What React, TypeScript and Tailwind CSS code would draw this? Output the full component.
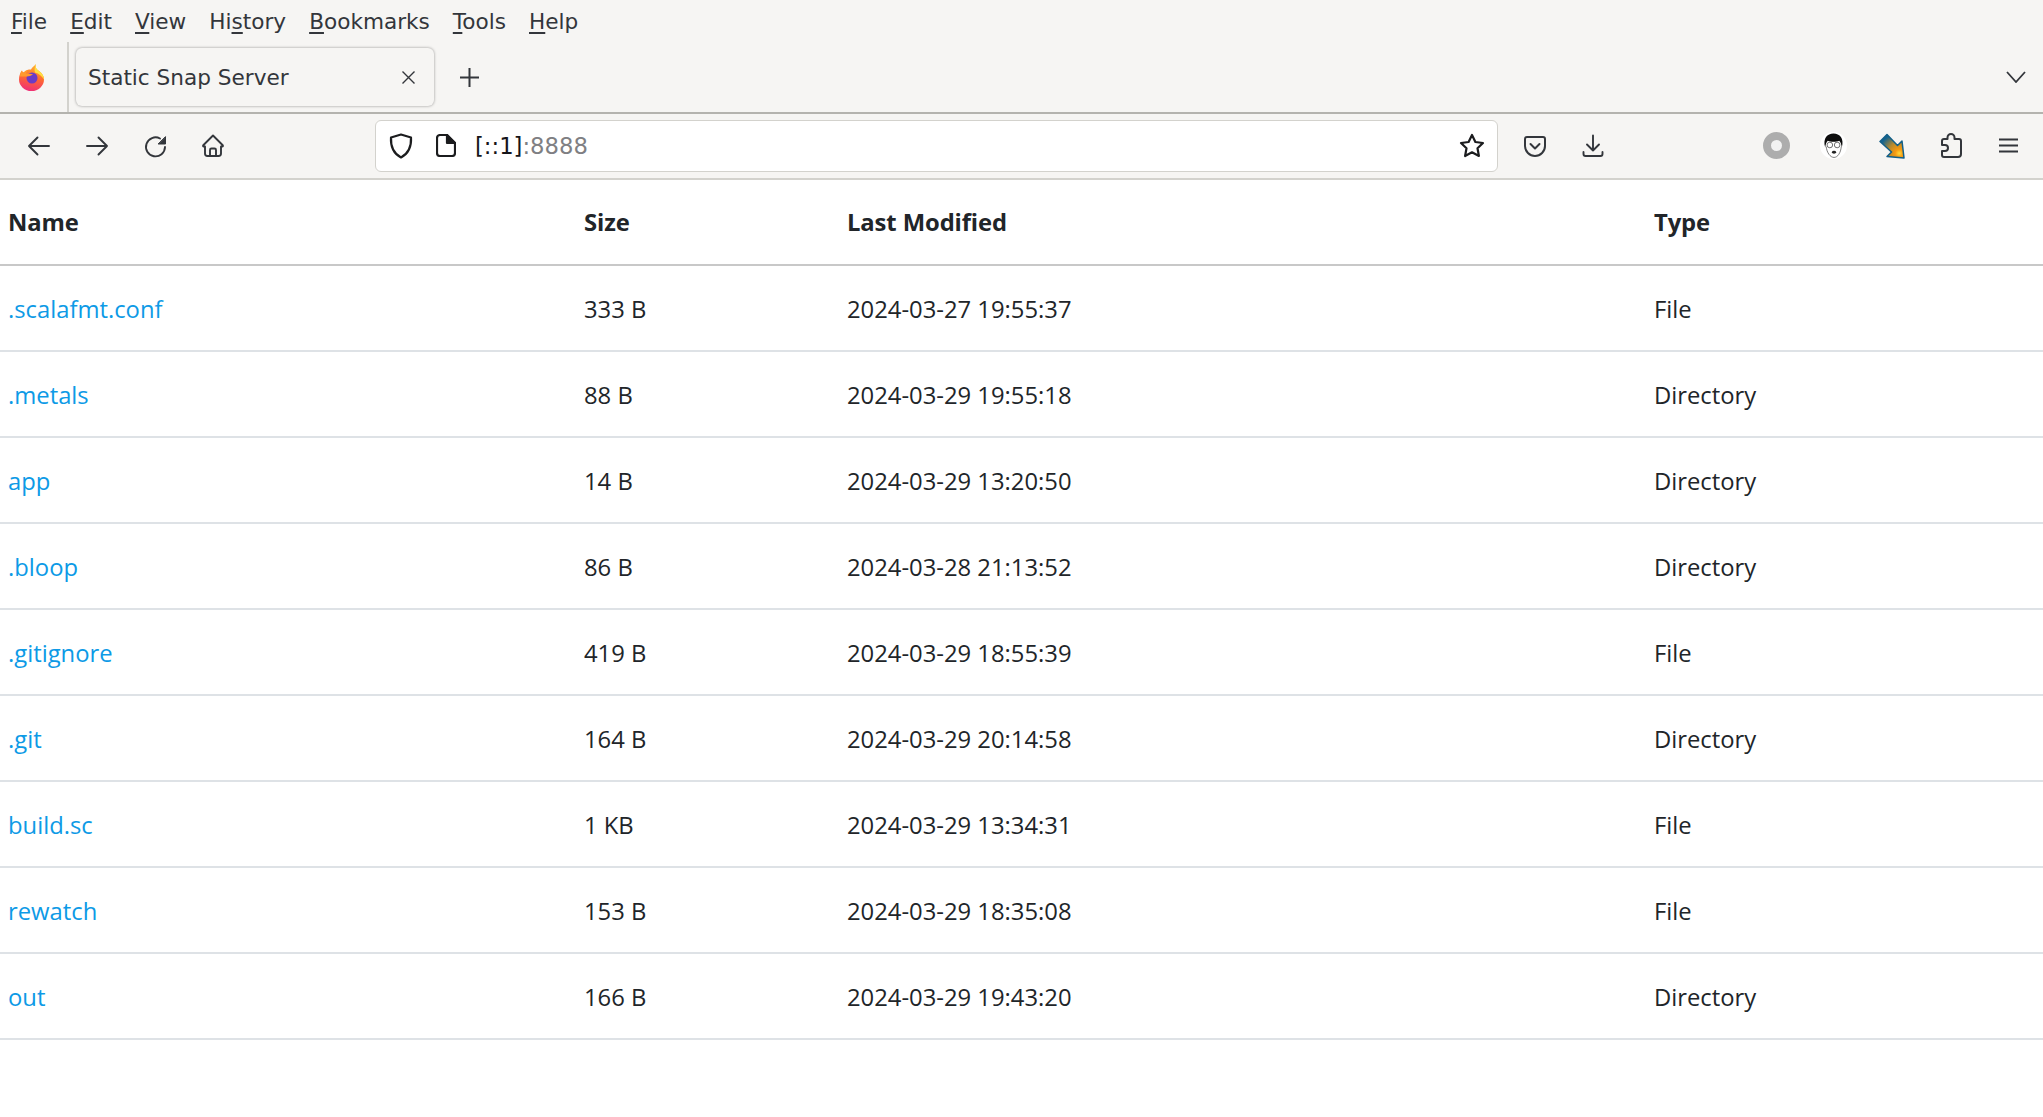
const rows = [
  [".scalafmt.conf", "333 B", "2024-03-27 19:55:37", "File"],
  [".metals", "88 B", "2024-03-29 19:55:18", "Directory"],
  ["app", "14 B", "2024-03-29 13:20:50", "Directory"],
  [".bloop", "86 B", "2024-03-28 21:13:52", "Directory"],
  [".gitignore", "419 B", "2024-03-29 18:55:39", "File"],
  [".git", "164 B", "2024-03-29 20:14:58", "Directory"],
  ["build.sc", "1 KB", "2024-03-29 13:34:31", "File"],
  ["rewatch", "153 B", "2024-03-29 18:35:08", "File"],
  ["out", "166 B", "2024-03-29 19:43:20", "Directory"],
];

const menus = [
  { before: "", key: "F", after: "ile" },
  { before: "", key: "E", after: "dit" },
  { before: "", key: "V", after: "iew" },
  { before: "Hi", key: "s", after: "tory" },
  { before: "", key: "B", after: "ookmarks" },
  { before: "", key: "T", after: "ools" },
  { before: "", key: "H", after: "elp" },
];

function Icon({ children }: { children: React.ReactNode }) {
  return (
    <svg width="24" height="24" viewBox="0 0 24 24" fill="none" stroke="#33363b" strokeWidth="1.9" strokeLinecap="round" strokeLinejoin="round">
      {children}
    </svg>
  );
}

function FirefoxLogo() {
  return (
    <svg width="25" height="27" viewBox="0 0 25 27">
      <defs>
        <linearGradient id="fxBody" x1="0.6" y1="0" x2="0.4" y2="1">
          <stop offset="0" stopColor="#ffb52e" />
          <stop offset="0.5" stopColor="#ff6a2f" />
          <stop offset="1" stopColor="#ef2f78" />
        </linearGradient>
      </defs>
      <path d="M17 0c-1 3 0 5 3 7 3 2 5 5 5 8.500a12.500 11.500 0 0 1-25 0C0 12 1 9 3 6.500c0 1 1 2 2 2C7 6 9 5.500 12 5.500c1-2 3-3.500 5-5.500z" fill="url(#fxBody)" />
      <path d="M17 0c-1 3 0 5 3 7 3 2 5 5 5 8.500-2-3-5-6-9-7-1-3 0-6 1-8.500z" fill="#ffdf3f" />
      <circle cx="13" cy="14" r="5.500" fill="#6a3bc6" />
      <path d="M1 12.500c0-3 1-5 2-6 0 1 1 2 2 2 1-2 2-2 4-2-1 1-2 2-2 3 2 0 5 0 7 1-2 1-4 2-6 2-3 0-5 0-7 0z" fill="#ff9a2e" />
    </svg>
  );
}

export default function App() {
  return (
    <div className="min-h-screen bg-white text-[#212529] font-['Open_Sans',sans-serif]">
      <div className="bg-[#f6f5f3] font-['DejaVu_Sans',sans-serif] text-[#33363b]">
        {/* Menu bar */}
        <div className="flex h-[42px] items-center gap-[23px] pl-[11px] pt-[2px] text-[21.6px]">
          {menus.map((m) => (
            <span key={m.key + m.after}>
              {m.before}
              <span className="underline underline-offset-[3px]">{m.key}</span>
              {m.after}
            </span>
          ))}
        </div>

        {/* Tab strip */}
        <div className="flex h-[72px] items-center border-b-2 border-[#b4b3ae]">
          <div className="flex h-full w-[69px] shrink-0 items-center justify-center border-r-2 border-[#d3d2cd] pr-[5px]">
            <FirefoxLogo />
          </div>
          <div className="ml-[7px] flex h-[58px] w-[358px] items-center justify-between rounded-[6px] bg-[#f6f5f3] pl-[12px] pr-[18px] text-[21.6px] shadow-[0_0_3px_rgba(0,0,0,0.4)]">
            <span className="pt-[3px]">Static Snap Server</span>
            <svg width="15" height="15" viewBox="0 0 15 15" stroke="#33363b" strokeWidth="1.4">
              <path d="M1.500 1.500l12 12M13.500 1.500l-12 12" />
            </svg>
          </div>
          <div className="ml-[26px] pt-[1px]">
            <svg width="19" height="19" viewBox="0 0 19 19" stroke="#33363b" strokeWidth="2">
              <path d="M9.500 0v19M0 9.500h19" />
            </svg>
          </div>
          <div className="ml-auto mr-[17px]">
            <svg width="20" height="12" viewBox="0 0 20 12" fill="none" stroke="#33363b" strokeWidth="1.8">
              <path d="M1 1l9 10 9-10" />
            </svg>
          </div>
        </div>

        {/* Nav bar */}
        <div className="flex h-[66px] items-center border-b-2 border-[#d3d2cd] pb-[1px]">
          <div className="ml-[27px]">
            <Icon><path d="M22 12H2M10.500 3.500L2 12l8.500 8.500" /></Icon>
          </div>
          <div className="ml-[34px]">
            <Icon><path d="M2 12h20M13.500 3.500L22 12l-8.500 8.500" /></Icon>
          </div>
          <div className="ml-[35px]">
            <Icon>
              <path d="M16 4.500A9.500 9.500 0 1 0 21 13" />
              <path d="M21.500 3v7h-7z" fill="#33363b" strokeWidth="1" />
            </Icon>
          </div>
          <div className="ml-[33px]">
            <Icon>
              <path d="M12 1.500L2.500 11c-.6.6-.6 1.500 0 1.500H4v7a2.500 2.500 0 0 0 2.500 2.500h11A2.500 2.500 0 0 0 20 19.500v-7h1.500c.6 0 .6-.9 0-1.500z" />
              <path d="M9 22v-6a1.500 1.500 0 0 1 1.500-1.500h3A1.500 1.500 0 0 1 15 16v6" />
            </Icon>
          </div>

          {/* URL bar */}
          <div className="ml-[150px] flex h-[52px] w-[1122.500px] shrink-0 items-center rounded-[6px] border border-[#d3d2cd] bg-white pl-[13px] pr-[12px]">
            <svg width="24" height="26" viewBox="0 0 24 26" fill="none" stroke="#1b1c1e" strokeWidth="2.200" strokeLinejoin="round">
              <path d="M12 1.500l10 3c.5 9-2.500 16-10 20C4.500 20.500 1.500 13.500 2 4.500z" />
            </svg>
            <div className="ml-[23px]">
              <svg width="20" height="23" viewBox="0 0 20 23" fill="none" stroke="#1b1c1e" strokeWidth="2.200" strokeLinejoin="round">
                <path d="M4 1h7l8 8v10a3 3 0 0 1-3 3H4a3 3 0 0 1-3-3V4a3 3 0 0 1 3-3z" />
                <path d="M11 1v8h8z" fill="#1b1c1e" />
              </svg>
            </div>
            <div className="ml-[19px] pt-[1px] text-[22.7px] text-[#15141a]">
              [::1]<span className="text-[#7f7f83]">:8888</span>
            </div>
            <div className="ml-auto">
              <svg width="26" height="26" viewBox="0 0 26 26" fill="none" stroke="#1b1c1e" strokeWidth="2.200" strokeLinejoin="round">
                <path d="M13 2l3.400 7 7.600 1-5.500 5.300 1.400 7.700-6.900-3.700-6.900 3.700 1.400-7.700L2 10l7.600-1z" />
              </svg>
            </div>
          </div>

          <div className="ml-[25px]">
            <svg width="24" height="24" viewBox="0 0 24 24" fill="none" stroke="#33363b" strokeWidth="2" strokeLinecap="round" strokeLinejoin="round">
              <path d="M4 3h16a2 2 0 0 1 2 2v7a10 10 0 0 1-20 0V5a2 2 0 0 1 2-2z" />
              <path d="M7.500 10l4.500 4.500L16.500 10" />
            </svg>
          </div>
          <div className="ml-[34px]">
            <Icon><path d="M12 1.500v15M6 10.500l6 6 6-6M2.500 18v2a2 2 0 0 0 2 2h15a2 2 0 0 0 2-2v-2" /></Icon>
          </div>

          {/* Extensions */}
          <div className="ml-[158px] h-[27px] w-[27px] rounded-full border-[8px] border-[#adadad] bg-[#f2f2f2]" />
          <div className="ml-[30px]">
            <svg width="27" height="27" viewBox="0 0 26 26">
              <circle cx="13" cy="13" r="13" fill="#fff" />
              <path d="M5 15C2.500 6 7 1.500 13 1.500S23.500 6 21 15c-.5-3-1-5-2.500-6.500-3 1.200-8 1.200-11 0C6 10 5.500 12 5 15z" fill="#0d0d0d" />
              <path d="M6 14c.5 6 4 10.500 7.500 10.500S20 20 20.500 14" fill="none" stroke="#666" strokeWidth="0.800" />
              <circle cx="9.500" cy="12.500" r="2.700" fill="none" stroke="#555" strokeWidth="0.800" />
              <circle cx="16.500" cy="12.500" r="2.700" fill="none" stroke="#555" strokeWidth="0.800" />
              <ellipse cx="13.500" cy="19.500" rx="2" ry="1.400" fill="#222" />
            </svg>
          </div>
          <div className="ml-[32px]">
            <svg width="26" height="26" viewBox="0 0 26 26">
              <defs>
                <radialGradient id="arrowGlow" cx="0.8" cy="0.8" r="0.85">
                  <stop offset="0" stopColor="#ffd83a" />
                  <stop offset="0.2" stopColor="#f79a10" />
                  <stop offset="0.55" stopColor="#b5892f" />
                  <stop offset="1" stopColor="#14648f" />
                </radialGradient>
              </defs>
              <path d="M8 1.500l10.500 11 4.500-4.500 2 17-17-1.500 4.500-4.500L1 8.500z" fill="url(#arrowGlow)" stroke="#125f88" strokeWidth="1.500" strokeLinejoin="round" />
            </svg>
          </div>
          <div className="ml-[36px]">
            <svg width="21" height="25" viewBox="0 0 21 25" fill="none" stroke="#33363b" strokeWidth="2" strokeLinejoin="round">
              <path d="M6.500 6V4.500a3.500 3.500 0 0 1 7 0V6H18a2 2 0 0 1 2 2v13a3 3 0 0 1-3 3H3a2 2 0 0 1-2-2v-4h3a3 3 0 0 0 0-6H1V8a2 2 0 0 1 2-2z" />
            </svg>
          </div>
          <div className="ml-[37px]">
            <svg width="19" height="15" viewBox="0 0 19 15" stroke="#33363b" strokeWidth="2">
              <path d="M0 1.500h19M0 7.500h19M0 13.500h19" />
            </svg>
          </div>
        </div>
      </div>

      {/* Listing */}
      <table className="w-full table-fixed border-collapse text-left text-[23.8px]">
        <colgroup>
          <col className="w-[576px]" />
          <col className="w-[263px]" />
          <col className="w-[807px]" />
          <col />
        </colgroup>
        <thead>
          <tr className="h-[85px] border-b-2 border-[#c8c8c8]">
            <th className="px-[8px] pt-[2px] font-bold tracking-[-0.1px]">Name</th>
            <th className="px-[8px] pt-[2px] font-bold tracking-[-0.1px]">Size</th>
            <th className="px-[8px] pt-[2px] font-bold tracking-[-0.1px]">Last Modified</th>
            <th className="px-[8px] pt-[2px] font-bold tracking-[-0.1px]">Type</th>
          </tr>
        </thead>
        <tbody>
          {rows.map((r) => (
            <tr key={r[0]} className="h-[86.04px] border-b-2 border-[#dee2e6]">
              <td className="px-[8px] pt-[3px]"><a className="text-[#0d9ae6]">{r[0]}</a></td>
              <td className="px-[8px] pt-[3px]">{r[1]}</td>
              <td className="px-[8px] pt-[3px]">{r[2]}</td>
              <td className="px-[8px] pt-[3px]">{r[3]}</td>
            </tr>
          ))}
        </tbody>
      </table>
    </div>
  );
}
